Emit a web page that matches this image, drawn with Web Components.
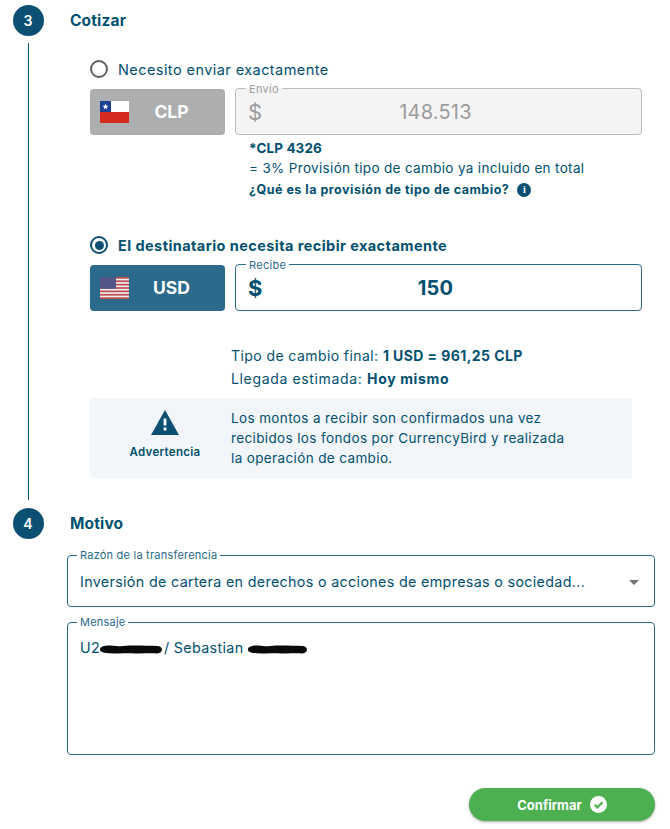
<!doctype html>
<html lang="es"><head><meta charset="utf-8"><title>Cotizar</title>
<style>
html,body{margin:0;padding:0;background:#fff}
body{font-family:Inter,"Liberation Sans",sans-serif;color:#01506f;width:670px;height:829px;overflow:hidden}
</style></head><body>
<cb-app></cb-app>
<script>
const def=(name,html,init)=>customElements.define(name,class extends HTMLElement{
  connectedCallback(){ if(this.shadowRoot) return; const r=this.attachShadow({mode:'open'}); r.innerHTML=typeof html==='function'?html(this):html; init&&init(this,r);}
});
const a=(el,n,d='')=>el.getAttribute(n)??d;

const CL=`<svg width="29" height="22" viewBox="0 0 29 22" aria-hidden="true"><rect width="29" height="22" fill="#fff"/><rect y="11" width="29" height="11" fill="#d52b1e"/><rect width="11" height="11" fill="#1c3f94"/><path d="M5.5 2.6l.8 2.2h2.3l-1.9 1.4.7 2.3-1.9-1.4-1.9 1.4.7-2.3-1.9-1.4h2.3z" fill="#fff"/></svg>`;
const US=`<svg width="29" height="22" viewBox="0 0 29 22" aria-hidden="true"><defs><pattern id="d" width="2" height="2" patternUnits="userSpaceOnUse"><rect width="2" height="2" fill="#3b3f73"/><circle cx="1" cy="1" r=".55" fill="#a9accb"/></pattern></defs><rect width="29" height="22" fill="#eee"/>${[0,1,2,3,4,5,6].map(i=>`<rect y="${(i*2*22/13).toFixed(2)}" width="29" height="1.69" fill="#bf4a4f"/>`).join('')}<rect width="16" height="11.8" fill="url(#d)"/></svg>`;

def('cb-step',h=>`<style>
:host{display:grid;grid-template-columns:31px 1fr;column-gap:26.5px}
.rail{display:flex;flex-direction:column;align-items:center}
.num{width:31px;height:31px;border-radius:50%;background:#0b4f73;color:#fff;display:flex;align-items:center;justify-content:center;font:600 14px Inter,sans-serif;flex:none}
.line{flex:1;width:1px;background:#0b5a80;margin-top:7.5px}
h2{margin:0;height:31px;font:700 15.5px/31px Inter,sans-serif;letter-spacing:.15px;color:#01506f}
</style>
<div class="rail"><div class="num">${a(h,'n')}</div>${h.hasAttribute('line')?'<div class="line"></div>':''}</div>
<div><h2>${a(h,'title')}</h2><slot></slot></div>`);

def('cb-radio',h=>{const on=h.hasAttribute('checked');return `<style>
:host{display:flex;align-items:center;gap:10px;height:20px;font:${on?700:400} 14.5px Inter,sans-serif;letter-spacing:.43px;color:#01506f;white-space:nowrap}
.o{box-sizing:border-box;width:18px;height:18px;border-radius:50%;border:2px solid ${on?'#0b4f73':'#616161'};display:flex;align-items:center;justify-content:center;flex:none}
.o i{width:9px;height:9px;border-radius:50%;background:#0b4f73;display:${on?'block':'none'}}
</style><span class="o"><i></i></span><slot></slot>`});

def('cb-currency',h=>{const off=h.hasAttribute('disabled');return `<style>
:host{box-sizing:border-box;display:flex;align-items:center;width:135px;height:46px;padding:0 10px;border-radius:4px;background:${off?'#adaeb0':'#2b6a8a'};color:#fff;font:700 17.5px Inter,sans-serif;flex:none}
svg{display:block;flex:none}
span{flex:1;text-align:center;padding-right:1px}
</style>${a(h,'flag')==='cl'?CL:US}<span><slot></slot></span>`});

def('cb-amount',h=>{const off=h.hasAttribute('disabled');const c=off?'#9b9b9b':'#01506f';const w=off?400:700;return `<style>
:host{display:block;flex:1;min-width:0}
fieldset{box-sizing:border-box;margin:0;height:52px;padding:0 18px 4px 12px;border:1px solid ${off?'#bdbdbd':'#2b6a8a'};border-radius:4px;background:${off?'#f4f4f4':'#fff'};display:flex;align-items:center}
legend{padding:0 3px;margin-left:-2px;font:400 11px/12px Inter,sans-serif;letter-spacing:.3px;color:${off?'#9b9b9b':'#2b6a8a'}}
.row{display:grid;grid-template-columns:1fr auto 1fr;align-items:center;width:100%;color:${c};font:${w} 22px Inter,sans-serif}
.v{text-align:center;font-size:20px;letter-spacing:.2px}
</style><fieldset><legend>${a(h,'label')}</legend><div class="row"><span>$</span><span class="v"><slot></slot></span><span></span></div></fieldset>`});

def('cb-field',h=>`<style>
:host{display:block}
fieldset{box-sizing:border-box;margin:0;height:${a(h,'h','58')}px;padding:${a(h,'pad','0')}px 12px ${h.hasAttribute('select')?'3px':'0'};border:1px solid #2b6a8a;border-radius:4px;display:${h.hasAttribute('select')?'flex':'block'};align-items:center;justify-content:space-between;background:#fff}
legend{padding:0 3px;margin-left:-3px;font:400 11px/12px Inter,sans-serif;letter-spacing:.22px;color:#2b6a8a}
.t{font:400 14.3px/20px Inter,sans-serif;letter-spacing:.33px;color:#01506f;white-space:nowrap}
.c{width:0;height:0;border-left:5px solid transparent;border-right:5px solid transparent;border-top:5px solid #757575;margin-right:3px;flex:none}
</style><fieldset><legend>${a(h,'label')}</legend><div class="t"><slot></slot></div>${h.hasAttribute('select')?'<i class="c"></i>':''}</fieldset>`);

def('cb-redact',h=>`<style>
:host{display:inline-block;width:${a(h,'w','40')}px;height:9px;vertical-align:-0.5px;margin-right:${a(h,'mr','0')}px}
svg{display:block;width:100%;height:100%}
</style><svg viewBox="0 0 60 8" preserveAspectRatio="none" aria-hidden="true"><path d="M2 1.5C8 -.3 12 .8 18 1c6 .2 10-.8 16-.5 8 .2 14 0 22 .3 3 .2 4 2 4 3.3 0 2-2 3.5-5 3.4-8-.3-14 .3-22 0-8-.3-14 .4-24-.2C1 7 0 5.5 0 4c0-1.2 .8-2.1 2-2.5z" fill="#0a0a0a"/></svg>`);

def('cb-alert',`<style>
:host{display:grid;grid-template-columns:141px 1fr;align-items:center;height:80px;background:#f2f5f9;color:#01506f}
.l{display:flex;flex-direction:column;align-items:center;gap:10px;margin:0 0 6px 9px;font:600 11.5px/14px Inter,sans-serif;letter-spacing:.3px}
svg{display:block}
.t{font:400 13.5px/20px Inter,sans-serif;letter-spacing:.37px;white-space:nowrap}
</style>
<div class="l"><svg width="28" height="25" viewBox="0 0 28 25" aria-hidden="true"><path d="M14 0 28 25H0z" fill="#0b4f73"/><rect x="12.6" y="8.5" width="2.8" height="7" fill="#fff"/><rect x="12.6" y="17.5" width="2.8" height="3" fill="#fff"/></svg><span>Advertencia</span></div>
<div class="t"><slot></slot></div>`);

def('cb-button',`<style>
:host{display:inline-flex;align-items:center;justify-content:center;gap:8px;box-sizing:border-box;width:186px;height:33px;border-radius:17px;background:#4caf50;color:#fff;font:700 13px Inter,sans-serif;box-shadow:0 1px 3px rgba(0,0,0,.35)}
svg{display:block}
</style><slot></slot><svg width="17" height="17" viewBox="0 0 17 17" aria-hidden="true"><circle cx="8.5" cy="8.5" r="8.5" fill="#fff"/><path d="M4.7 8.8 7.3 11.4 12.4 6.2" fill="none" stroke="#4caf50" stroke-width="2.2"/></svg>`);

def('cb-app',`<style>
:host{display:block;box-sizing:border-box;padding:4.5px 15px 0 12.5px;font-family:Inter,sans-serif;color:#01506f}
.q{padding:23.5px 13px 0 20px;height:441px;box-sizing:content-box}
.r{display:flex;align-items:flex-end;gap:10px;margin-top:3.5px}
.notes{margin:3.5px 0 0 159px;font-size:13.5px;line-height:20px;letter-spacing:.33px;white-space:nowrap}
.notes b{display:block;font-size:13.5px;letter-spacing:.1px}
.notes .q2{display:flex;align-items:center;gap:8px;margin-top:2px;font-size:12.5px;line-height:20px;font-weight:700;letter-spacing:.5px}
.info{width:14px;height:14px;border-radius:50%;background:#0b4f73;color:#fff;font:700 10px/14px "Liberation Serif",serif;letter-spacing:0;text-align:center}
.second{margin-top:35px}
.sum{margin:33px 0 8px 141px;font-size:14px;line-height:23px;letter-spacing:.42px;white-space:nowrap}
.sum span{letter-spacing:.65px}
.al{margin-right:10px}
.gap{height:8px}
.m{margin:10px 0 0 -3px}
.m cb-field+cb-field{margin-top:9px}
.foot{display:flex;justify-content:flex-end;margin-top:33px}
</style>
<cb-step n="3" title="Cotizar" line>
  <div class="q">
    <cb-radio>Necesito enviar exactamente</cb-radio>
    <div class="r"><cb-currency flag="cl" disabled>CLP</cb-currency><cb-amount label="Envío" disabled>148.513</cb-amount></div>
    <div class="notes"><b>*CLP 4326</b>= 3% Provisión tipo de cambio ya incluido en total
      <div class="q2">¿Qué es la provisión de tipo de cambio? <span class="info">i</span></div></div>
    <cb-radio class="second" checked>El destinatario necesita recibir exactamente</cb-radio>
    <div class="r"><cb-currency flag="us">USD</cb-currency><cb-amount label="Recibe">150</cb-amount></div>
    <div class="sum">Tipo de cambio final: <b>1 USD = 961,25 CLP</b><br><span>Llegada estimada: <b>Hoy mismo</b></span></div>
    <cb-alert class="al">Los montos a recibir son confirmados una vez<br>recibidos los fondos por CurrencyBird y realizada<br>la operación de cambio.</cb-alert>
  </div>
</cb-step>
<div class="gap"></div>
<cb-step n="4" title="Motivo">
  <div class="m">
    <cb-field label="Razón de la transferencia" h="58" select>Inversión de cartera en derechos o acciones de empresas o sociedad...</cb-field>
    <cb-field label="Mensaje" h="139" pad="10">U2<cb-redact w="62" mr="2"></cb-redact>/ Sebastian <cb-redact w="59"></cb-redact></cb-field>
  </div>
  <div class="foot"><cb-button>Confirmar</cb-button></div>
</cb-step>`);
</script>
</body></html>
